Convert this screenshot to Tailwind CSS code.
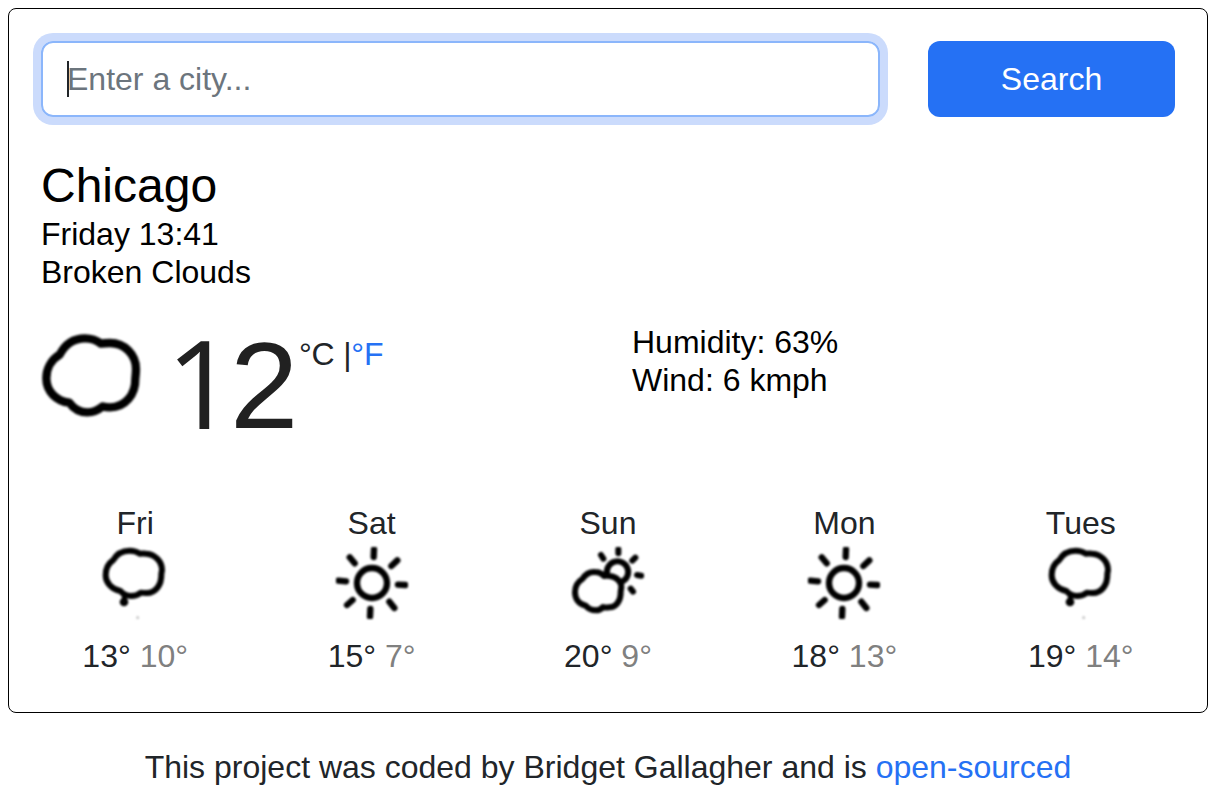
<!DOCTYPE html>
<html lang="en">
<head>
<meta charset="utf-8">
<title>Weather</title>
<script src="https://cdn.jsdelivr.net/npm/@tailwindcss/browser@4"></script>
</head>
<body class="h-[796px] overflow-hidden bg-white pt-2 pl-2 font-['Liberation_Sans',Arial,sans-serif] text-[32px] leading-[48px] text-[#212529]">
<svg class="hidden">
  <symbol id="cloud" viewBox="33 0 300 330">
    <path d="M89 104C105 73 130 55 165 55C185 55 200 61 213 71C222 69 230 69 240 69C283 69 318 103 318 147C318 158 317 165 316 175C317 225 285 262 240 262C232 262 224 261 218 259C205 270 190 277 172 277C150 277 132 267 118 248C80 244 49 215 49 175C49 148 62 120 89 104Z" fill="none" stroke="#000" stroke-width="25" stroke-linejoin="round"/>
  </symbol>
  <symbol id="drop" viewBox="88 141 216 216">
    <path d="M130 181C140 163 156 152 180 152C192 152 202 155 210 161C216 160 222 160 230 161C256 163 277 184 277 210L275 222C276 255 258 279 231 279C225 279 218 279 213 278C206 284 197 288 184 288C172 288 161 283 152 273C126 268 108 248 108 226C108 208 114 192 130 181Z" fill="none" stroke="#000" stroke-width="18" stroke-linejoin="round"/>
    <path d="M164 285V304" stroke="#000" stroke-width="15"/><circle cx="163" cy="306" r="13"/>
    <circle cx="204" cy="353" r="4" fill="#bbb"/>
  </symbol>
  <symbol id="sun" viewBox="78 141 216 216">
    <g fill="none" stroke="#000" stroke-width="19" stroke-linecap="round">
      <circle cx="186" cy="249" r="45"/>
      <path d="M192 148L191 171M119 172L134 190M262 181L244 198M85 242L108 244M264 254L286 255M128 300L111 315M238 305L253 324M181 327L180 350"/>
    </g>
  </symbol>
  <symbol id="partly" viewBox="66 141 216 216">
    <g fill="none" stroke="#000" stroke-width="18" stroke-linecap="round" stroke-linejoin="round">
      <path d="M171 221A32 32 0 1 1 216 245"/>
      <path d="M97 237C106 223 118 215 135 216C145 216 155 220 162 228C167 227 173 227 179 228C200 230 214 245 214 262L212 275C213 302 198 322 178 322C170 323 164 323 159 321C154 327 147 331 138 331C125 331 115 327 107 317C88 313 75 298 75 277C75 260 82 246 97 237Z"/>
      <path d="M205 148V160M153 165L160 176M256 173L247 182M261 225L274 227M242 266L249 275"/>
    </g>
  </symbol>
</svg>
<main class="h-[705px] w-[1200px] rounded-lg border border-black px-8 pt-8">
  <form class="flex h-[76px] gap-12">
    <div class="flex w-[839px] items-center rounded-xl border-2 border-[#8bb6fb] px-6 text-[#6c757d] ring-8 ring-[#cbdbfc]">
      <span class="h-9 w-0.5 bg-[#212529]"></span><span class="-ml-0.5">Enter a city...</span>
    </div>
    <button type="button" class="flex-1 rounded-xl bg-[#2571f4] text-white">Search</button>
  </form>
  <header class="mt-10 text-black">
    <h1 class="text-[48px] leading-[58px]">Chicago</h1>
    <p class="leading-[38px]">Friday 13:41</p>
    <p class="leading-[38px]">Broken Clouds</p>
  </header>
  <section class="mt-[29px] flex h-[179px]">
    <div class="flex w-[591px]">
      <svg class="h-[110px] w-[100px] overflow-visible blur-[0.8px]"><use href="#cloud"/></svg>
      <strong class="ml-[24px] mt-[6px] flex w-[134px] text-[123px] leading-[120px] font-normal text-[#212121]"><span class="-mt-1 w-[67px] pl-px font-['Open_Sans',sans-serif]">1</span><span class="-ml-0.5">2</span></strong>
      <span class="mt-[10px] whitespace-nowrap tracking-[-0.2px]">°C |<a class="text-[#2571f4]">°F</a></span>
    </div>
    <div class="mt-[3px] leading-[38px] text-black"><p>Humidity: 63%</p><p>Wind: 6 kmph</p></div>
  </section>
  <section class="-mx-6 grid grid-cols-5 text-center">
    <div><p>Fri</p><svg class="mx-auto size-[72px] blur-[0.8px]"><use href="#drop"/></svg><p class="mt-[13px]">13° <span class="text-[#808080]">10°</span></p></div>
    <div><p>Sat</p><svg class="mx-auto size-[72px] blur-[0.8px]"><use href="#sun"/></svg><p class="mt-[13px]">15° <span class="text-[#808080]">7°</span></p></div>
    <div><p>Sun</p><svg class="mx-auto size-[72px] blur-[0.8px]"><use href="#partly"/></svg><p class="mt-[13px]">20° <span class="text-[#808080]">9°</span></p></div>
    <div><p>Mon</p><svg class="mx-auto size-[72px] blur-[0.8px]"><use href="#sun"/></svg><p class="mt-[13px]">18° <span class="text-[#808080]">13°</span></p></div>
    <div><p>Tues</p><svg class="mx-auto size-[72px] blur-[0.8px]"><use href="#drop"/></svg><p class="mt-[13px]">19° <span class="text-[#808080]">14°</span></p></div>
  </section>
</main>
<footer class="mt-[30px] w-[1200px] text-center">This project was coded by Bridget Gallagher and is <a class="text-[#2571f4]">open-sourced</a></footer>
</body>
</html>
